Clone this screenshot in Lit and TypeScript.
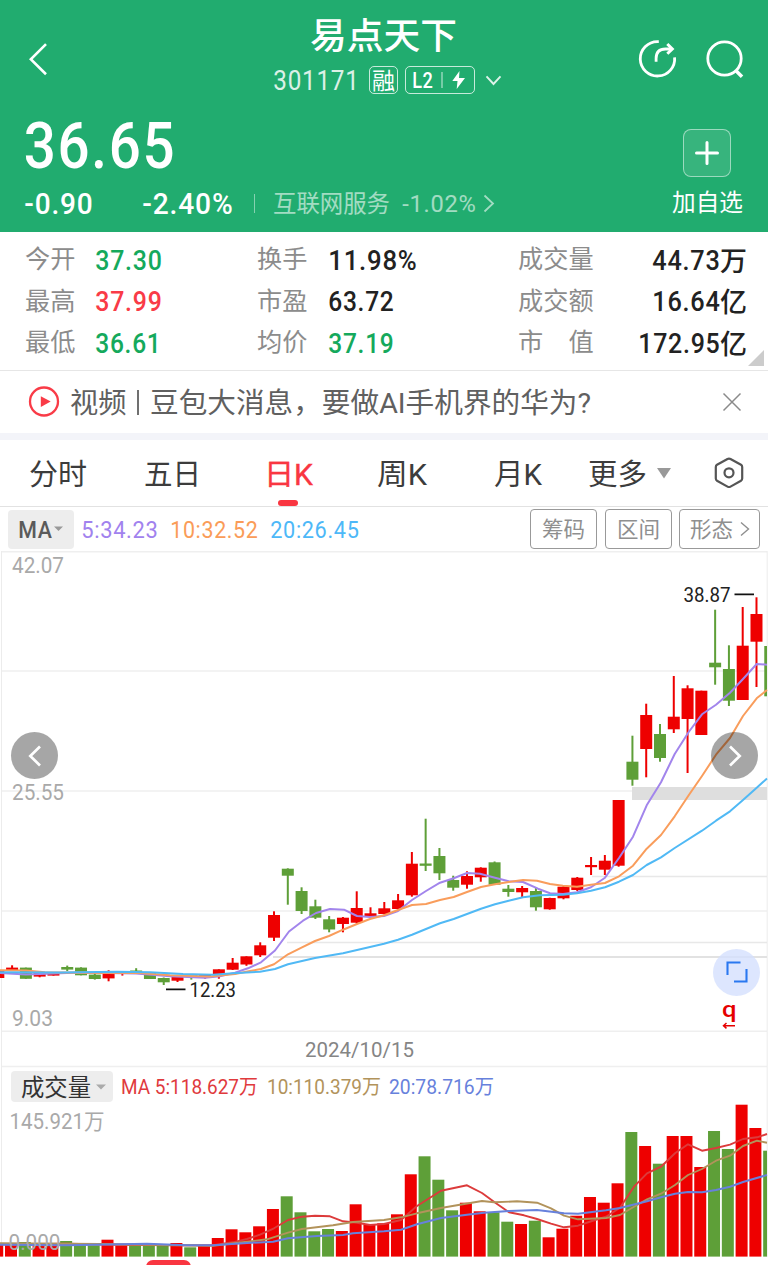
import { LitElement, html, svg, css } from "lit";
import { customElement } from "lit/decorators.js";

const CJK = /[\u3400-\u9fff]/;

/** A single line of text drawn at a fixed advance width; figures get slightly looser tracking. */
const fit = (s: string, w: number, size: number, cls = "") => {
  const cjk = CJK.test(s);
  const track = cjk ? 0 : size * 0.03;
  return html`<svg class="fit ${cls}" width=${w} height=${size}>
  <text x=${track / 3} y=${size * (cjk ? 0.88 : 0.856)} font-size=${size} letter-spacing=${track}
    textLength=${w + track / 3} lengthAdjust="spacingAndGlyphs">${s}</text></svg>`;
};

const label = (s: string, x: number, y: number, w: number, size: number, cls: string) => svg`<text
  class=${cls} x=${x} y=${y} font-size=${size} textLength=${w} lengthAdjust="spacingAndGlyphs">${s}</text>`;

const textCss = css`
  :host { display: block; font-family: Roboto, "Noto Sans CJK SC", sans-serif; }
  svg { display: block; flex: none; }
  text { font-family: Roboto, "Noto Sans CJK SC", sans-serif; fill: currentColor; white-space: pre; }
  .fit { overflow: visible; }
  .m { font-weight: 500; }
`;

const STEP = 13.785;
const UP = "#ee0000";
const DOWN = "#5e9f38";

// colour, body top, body bottom, high, low
type Candle = [string, number, number, number, number];
const candles: Candle[] = [
  ["r", 971, 978, 971, 978], ["r", 967.6, 971, 965.3, 971], ["g", 967.6, 978.8, 967.6, 978.8],
  ["r", 972, 976.6, 972, 977.3], ["r", 973, 975.6, 973, 975.6], ["g", 967, 969.6, 965.6, 971],
  ["g", 967.6, 975.3, 967.3, 975.3], ["g", 974.6, 979, 973, 979.6], ["r", 973, 978.4, 970.3, 981.3],
  ["r", 972.5, 974, 972, 975.6], ["g", 970.5, 972.5, 968.2, 973], ["g", 973, 979, 973, 979],
  ["g", 978, 982.3, 977.5, 985], ["r", 976, 980.7, 976, 982], ["g", 974, 976.5, 974, 979.6],
  ["r", 975, 978, 975, 978.6], ["r", 969.3, 975, 969.3, 978.7], ["r", 962.7, 969.7, 958, 970],
  ["r", 956.3, 964.5, 956.3, 965.8], ["r", 945.3, 955.3, 942.3, 957], ["r", 915, 937.7, 911.3, 941],
  ["g", 868.7, 875.7, 868.3, 904.7], ["g", 891, 911, 887.3, 914], ["g", 906.3, 917.7, 899.7, 919],
  ["g", 919.3, 929.5, 916, 932.3], ["r", 917.7, 924, 917, 932.3], ["r", 908, 922.7, 891.3, 923.7],
  ["r", 913.3, 916.7, 907.3, 917], ["r", 908.3, 914, 902, 914.5], ["r", 900.3, 909, 894, 909.5],
  ["r", 863.7, 895.3, 852, 896.7], ["g", 863.5, 865.8, 818.7, 871], ["g", 856, 873.3, 848, 880],
  ["g", 880, 887.7, 875.7, 890.7], ["r", 876, 884.7, 871.3, 888.7], ["r", 867.7, 877.3, 867.3, 881.7],
  ["g", 862.3, 884.7, 861.5, 885], ["g", 888.7, 892, 885, 896.7], ["r", 888, 892.3, 886, 897],
  ["g", 891, 907.3, 887.7, 910.7], ["r", 898, 909.3, 897.7, 909.7], ["r", 886.7, 898.3, 886, 899.3],
  ["r", 877.7, 890, 877, 891], ["r", 865, 867.2, 857, 875], ["r", 860.7, 869.7, 855, 875],
  ["r", 800, 865.7, 800, 866.7], ["g", 761.7, 779.7, 735.7, 785.7], ["r", 715, 749, 703.7, 777.3],
  ["g", 734, 758, 724, 761.7], ["r", 716.7, 729.3, 676, 733], ["r", 688.3, 719, 685.3, 773],
  ["r", 690.7, 735, 690.7, 735], ["g", 662.7, 667.3, 609.7, 684.7], ["g", 669, 700.7, 645.3, 706],
  ["r", 645.7, 700, 607, 700], ["r", 614, 641.7, 597.3, 687], ["g", 646, 696.3, 646, 696.3],
];

const ma5 = "0,973 26,974.5 40,974 80,972.5 136,973.5 170,976.3 205,977.7 220,976.2 235,972.6 248,968.3 261,962.3 275,950.5 289,931.5 303,920.7 316,913 330,909 344,909.7 357,916 370,917 384,916 398,911 412,900 426,891 440,882.7 453.7,878.3 467,873 480,873.7 495,877.7 508.7,881.3 523,882 538,888.7 550,893.3 563,894 577,892.3 591,887.3 605,877.7 619,858 633,836.7 646.7,805.3 661,782.3 674.7,754 688.7,732 702,714.3 716,704.7 730,692.7 743,679 756.7,664 767,664.7";
const ma10 = "0,970.3 26,970.5 45,972.3 80,972.8 140,973 170,975.2 210,976.4 235,974 250,971 261,969 274,964.3 288,954.3 302,947.3 315,941 329,936 343,929.7 357,924 370,919 384,915.3 398,910 412,905 426,904 440,900 453.7,897 467,892 481,887 495,884.3 508.7,882 523,880 537,880.8 550,884 563,885.7 577,886.7 591,884.7 605,883 619,876.3 633,865.7 646.7,848.7 661,835 674.7,816.3 688.7,795.3 702,776 716,754.7 730,738 743,716 756.7,698.3 767,690";
const ma20 = "0,972.3 60,972.5 117,971.7 150,972.3 183,974 213,974.7 233,973.3 260,971.7 275,969 288,964.3 302,961 315,958 343,953.3 384,943.7 398,939.7 412,934.7 440,923.3 453.7,919 481,908.7 495,904.3 508.7,900.7 523,897.3 540,895.3 563,894.7 577,893.3 591,890.7 605,887.3 619,881.7 633,875 646.7,865 661,857.3 674.7,848 702,830.7 716,820.7 730,811.3 743,800 756.7,787.7 767,778.5";

const volumeTop = [
  1244, 1245, 1242, 1245, 1245, 1241, 1245.3, 1245.3, 1239.7, 1245.3, 1245.3, 1245.7, 1246, 1243,
  1247.3, 1246, 1238, 1229.3, 1232.3, 1226.3, 1209, 1196.3, 1212.3, 1231.3, 1229, 1231, 1204.3,
  1224.7, 1223.3, 1214.3, 1174.3, 1156.3, 1179.7, 1210.3, 1202.7, 1211.3, 1212.3, 1221.7, 1224,
  1220.7, 1237.3, 1228.7, 1215.7, 1197, 1202.7, 1183.3, 1132, 1146, 1163.7, 1136, 1136, 1167,
  1131, 1149, 1104.7, 1128, 1150.7,
];
const vma5 = "0,1244.3 67,1243.7 117,1244.7 177,1245.3 213,1245.3 233,1242.3 247,1239 260,1234.7 274,1228.3 288,1220 302,1216.7 315,1215.7 330,1216.3 343,1221.3 357,1222.7 370,1225 384,1224 401,1220 417,1206 441,1190.7 467,1185.3 482,1193 496,1203.3 509,1212.3 524,1215.3 537,1219 551,1223.7 564,1227.3 578,1225.7 592,1221 606,1216.7 620,1207.7 634,1186.7 647,1173.3 661,1166.7 675,1153.3 688,1144.3 702,1150.7 716,1148 730,1144.7 743,1139 757,1137.3 767,1134";
const vma10 = "0,1243.3 100,1244 213,1245.7 247,1241.7 267,1239.3 288,1232.7 302,1229 333,1225.3 353,1222 384,1220 401,1217.3 417,1213.3 441,1208 454,1205.7 482,1201 494,1202.3 517,1201.3 537,1202.7 551,1208.3 564,1215.7 578,1219.3 606,1218 620,1215 634,1206.7 647,1199.3 661,1193.7 675,1185 688,1175 702,1169 716,1160.7 730,1155.7 743,1146 757,1140.7 767,1142.7";
const vma20 = "0,1244.7 67,1245.3 147,1243.7 187,1245.3 213,1245.3 247,1243 273,1241.7 288,1238.3 317,1236 343,1235 353,1233.3 384,1231.3 401,1229.7 417,1224.3 441,1218 467,1214.7 484,1212.7 509,1211 537,1210 564,1213.3 578,1213.7 606,1210.3 620,1208 647,1201.3 661,1197.3 675,1193.7 688,1192 702,1192.3 716,1190 730,1186.7 743,1182 767,1175";

@customElement("quote-header")
export class QuoteHeader extends LitElement {
  static styles = [textCss, css`
    :host { background: #21ac6f; color: #fff; height: 232px; overflow: hidden; }
    .top { display: flex; align-items: flex-start; height: 116px; }
    .back { margin: 43px 0 0 29px; }
    .name { margin-left: 224px; width: 229px; padding-top: 17px; }
    .title { margin-left: 37px; }
    .sub { display: flex; align-items: center; height: 28px; margin-top: 13px; }
    .code { opacity: .84; }
    .tag { display: flex; align-items: center; justify-content: center; box-sizing: border-box;
      border: 1.5px solid rgba(255,255,255,.75); border-radius: 5px; height: 28px; width: 29px; margin-left: 10px; }
    .level { width: 70px; margin-left: 7px; gap: 8px; }
    .chev { margin-left: 10px; }
    .share { margin: 39px 0 0 136px; }
    .search { margin: 39px 0 0 28px; }
    .bottom { display: flex; justify-content: space-between; }
    .price { margin: -4px 0 0 23px; }
    .row { display: flex; align-items: center; height: 30px; margin-top: 11px; padding-left: 24px; }
    .pct { margin-left: 49px; }
    .sep { width: 1px; height: 19px; background: rgba(255,255,255,.45); margin: 0 18px 0 21px; }
    .dim { opacity: .58; }
    .ind { margin-left: 12px; }
    .go { margin-left: 7px; }
    .add { width: 72px; margin: 13px 25px 0 0; display: flex; flex-direction: column; align-items: center; }
    .plus { box-sizing: border-box; width: 48px; height: 48px; border: 1px solid rgba(255,255,255,.5);
      border-radius: 8px; background: rgba(255,255,255,.1); display: flex; align-items: center; justify-content: center; margin-bottom: 12.500px; }
  `];
  render() {
    return html`
      <div class="top">
        <svg class="back" width="20" height="33" viewBox="0 0 20 33" fill="none" stroke="#fff" stroke-width="2.6"><path d="M17 1.2 1.8 16.3 17 31.2"/></svg>
        <div class="name">
          <div class="title">${fit("易点天下", 147, 36, "m")}</div>
          <div class="sub">
            ${fit("301171", 86, 28, "code")}
            <span class="tag">${fit("融", 23, 23)}</span>
            <span class="tag level">${fit("L2", 21, 22, "m")}
              <svg width="27" height="20" viewBox="0 0 27 20"><path d="M1 2v16" stroke="#fff" stroke-opacity=".6" stroke-width="1.3"/><path d="M18.500 1 11.300 11H16.500L15.700 19 24 8H18z" fill="#fff"/></svg>
            </span>
            <svg class="chev" width="17" height="11" viewBox="0 0 17 11" fill="none" stroke="#fff" stroke-opacity=".85" stroke-width="1.9"><path d="M1.500 1.300 8.500 9 15.500 1.300"/></svg>
          </div>
        </div>
        <svg class="share" width="40" height="40" viewBox="0 0 40 40" fill="none" stroke="#fff" stroke-width="2.800"><path d="M20.800 2.600H19.500A17.200 17.200 0 1 0 36.600 18.300"/><path d="M18.100 22.800V19.500Q18.100 10 27.500 10H33"/><path d="M29.300 5 34.300 9.900 29.300 14.800" stroke-width="3"/></svg>
        <svg class="search" width="42" height="42" viewBox="0 0 42 42" fill="none" stroke="#fff" stroke-width="2.800"><circle cx="18.500" cy="19.500" r="16.700"/><path d="m29.500 31.300 6.500 6.500" stroke-width="3.500"/></svg>
      </div>
      <div class="bottom">
        <div>
          <div class="price">${fit("36.65", 152, 65, "m")}</div>
          <div class="row">
            ${fit("-0.90", 69, 29, "m")}
            <span class="pct">${fit("-2.40%", 91, 29, "m")}</span>
            <span class="sep"></span>
            ${fit("互联网服务", 117, 23.5, "dim")}
            <span class="ind">${fit("-1.02%", 74, 24.5, "dim")}</span>
            <svg class="go dim" width="12" height="19" viewBox="0 0 12 19" fill="none" stroke="#fff" stroke-width="1.800"><path d="M1.500 1.500 10 9.500 1.500 17.500"/></svg>
          </div>
        </div>
        <div class="add">
          <span class="plus"><svg width="26" height="26" viewBox="0 0 26 26" stroke="#fff" stroke-width="3" stroke-linecap="round"><path d="M13 2.500v21M2.500 13h21"/></svg></span>
          ${fit("加自选", 71, 23.5)}
        </div>
      </div>`;
  }
}

type Stat = [string, string, string, number];
const stats: Stat[][] = [
  [["今开", "37.30", "green", 67], ["换手", "11.98%", "dark", 89], ["成交量", "44.73万", "dark", 95]],
  [["最高", "37.99", "red", 67], ["市盈", "63.72", "dark", 66], ["成交额", "16.64亿", "dark", 95]],
  [["最低", "36.61", "green", 66], ["均价", "37.19", "green", 66], ["市　值", "172.95亿", "dark", 109]],
];

@customElement("quote-stats")
export class QuoteStats extends LitElement {
  static styles = [textCss, css`
    :host { height: 138px; border-bottom: 1px solid #e6e6e6; position: relative; background: #fff; }
    .grid { padding: 7.500px 21px 0 25px; }
    .row { display: grid; grid-template-columns: 70px 162px 71px 190px 76px 1fr; height: 41.5px; align-items: center; }
    .label { color: #8c8c8c; margin-top: -3px; }
    .green { color: #15a95c; } .red { color: #f93b47; } .dark { color: #222; }
    .end { display: flex; justify-content: flex-end; }
    .corner { position: absolute; right: 4px; bottom: 4px; }
  `];
  render() {
    return html`<div class="grid">${stats.map(r => html`<div class="row">${r.map(([l, v, c, w], i) => {
      const num = v.replace(/[万亿]/, "");
      const unit = v.slice(num.length);
      return html`<span class="label">${fit(l, l.length * 25.2, 25)}</span>
        <span class="${c} ${i === 2 ? "end" : ""}">${unit ? html`${fit(num, w - 27, 27, "m")}${fit(unit, 27, 27, "m")}` : fit(v, w, 27, "m")}</span>`;
    })}</div>`)}</div>
    <svg class="corner" width="16" height="16"><path d="M16 0V16H0z" fill="#ccc"/></svg>`;
  }
}

@customElement("news-strip")
export class NewsStrip extends LitElement {
  static styles = [textCss, css`
    :host { height: 62px; background: #fff; border-bottom: 7px solid #f3f4f9; color: #606060; }
    .line { height: 100%; display: flex; align-items: center; padding: 0 26px 0 27.500px; }
    .head { margin-left: 10px; }
    .bar { width: 2px; height: 25px; background: #707070; margin: 0 11px; }
    .x { margin-left: auto; }
  `];
  render() {
    return html`<div class="line">
      <svg width="32" height="32" viewBox="0 0 32 32"><circle cx="16" cy="15.500" r="14" fill="none" stroke="#f93b47" stroke-width="2.300"/><path d="M12.800 10.300v10.600L22.700 15.600z" fill="#f93b47"/></svg>
      <span class="head">${fit("视频", 56.500, 28.3)}</span><span class="bar"></span>
      ${fit("豆包大消息，要做AI手机界的华为?", 441, 28.5)}
      <svg class="x" width="20" height="20" viewBox="0 0 20 20" stroke="#8a8a8a" stroke-width="1.500"><path d="m1.500 1.500 17 17m0-17-17 17"/></svg>
    </div>`;
  }
}

@customElement("period-tabs")
export class PeriodTabs extends LitElement {
  static styles = [textCss, css`
    :host { height: 66px; border-bottom: 1px solid #e2e2e2; color: #3c3c3c; background: #fff; }
    .tabs { height: 66px; display: grid; grid-template-columns: 115px 120px 113px 117px 94px 125px 1fr; padding-left: 29px; }
    .tab { display: flex; align-items: center; }
    .on { color: #f93641; flex-direction: column; align-items: flex-start; }
    .on::before { content: ""; height: 18.500px; }
    .on text { stroke: currentColor; stroke-width: .4px; }
    .under { width: 20px; height: 6px; border-radius: 3px; background: #f93641; margin: 12.500px 0 0 14px; }
    .tri { margin-left: 10px; }
  `];
  render() {
    return html`<div class="tabs">
      <span class="tab">${fit("分时", 58, 29)}</span>
      <span class="tab">${fit("五日", 57, 29)}</span>
      <span class="tab on">${fit("日K", 49, 29)}<i class="under"></i></span>
      <span class="tab">${fit("周K", 50, 29)}</span>
      <span class="tab">${fit("月K", 48, 29)}</span>
      <span class="tab">${fit("更多", 59, 29)}<svg class="tri" width="14" height="11"><path d="M0 0H14L7 10.500z" fill="#999"/></svg></span>
      <span class="tab"><svg width="32" height="34" viewBox="0 0 32 34" fill="none" stroke="#555" stroke-width="2.200" stroke-linejoin="round"><path d="M14.500 3 4 8.800Q2.800 9.500 2.800 11V22.500Q2.800 24 4 24.700L14.500 30.600Q16 31.400 17.500 30.600L28 24.700Q29.200 24 29.200 22.500V11Q29.200 9.500 28 8.800L17.500 3Q16 2.200 14.500 3z"/><circle cx="16" cy="16.800" r="4.500"/></svg></span>
    </div>`;
  }
}

@customElement("indicator-bar")
export class IndicatorBar extends LitElement {
  static styles = [textCss, css`
    :host { height: 44px; background: #fff; }
    .bar { height: 44px; display: flex; align-items: center; padding: 0 8px; }
    .chip { width: 66px; height: 39px; background: #ededed; border-radius: 4px; display: flex; align-items: center; padding-left: 10px; box-sizing: border-box; color: #5a5a5a; gap: 2px; }
    .a { color: #a182ee; margin-left: 7px; } .b { color: #fa9c58; margin-left: 12px; } .c { color: #4db8f8; margin-left: 12px; }
    .btns { display: flex; gap: 7.500px; margin-left: auto; color: #8f8f8f; }
    .btn { box-sizing: border-box; width: 67px; height: 40px; border: 1px solid #999; border-radius: 4px; display: flex; align-items: center; justify-content: center; gap: 7px; }
    .wide { width: 81px; }
  `];
  render() {
    return html`<div class="bar">
      <span class="chip">${fit("MA", 34, 24, "m")}<svg width="9" height="6"><path d="M0 .500H9L4.500 5z" fill="#999"/></svg></span>
      <span class="a">${fit("5:34.23", 77, 24.500)}</span>
      <span class="b">${fit("10:32.52", 88, 24.500)}</span>
      <span class="c">${fit("20:26.45", 89, 24.500)}</span>
      <div class="btns">
        <span class="btn">${fit("筹码", 43, 21.500)}</span>
        <span class="btn">${fit("区间", 43, 21.500)}</span>
        <span class="btn wide">${fit("形态", 43, 21.500)}<svg width="10" height="16" viewBox="0 0 10 16" fill="none" stroke="#8f8f8f" stroke-width="1.400"><path d="m1 1.500 7.500 6.500L1 14.500"/></svg></span>
      </div>
    </div>`;
  }
}

@customElement("stock-charts")
export class StockCharts extends LitElement {
  static styles = [textCss, css`
    :host { position: relative; height: 714px; overflow: hidden; background: #fff; }
    .axis { color: #a9a9a9; } .mark { color: #222; } .date { color: #858585; }
    .nav { position: absolute; top: 181px; width: 47px; height: 47px; border-radius: 50%; background: rgba(0,0,0,.35); display: flex; align-items: center; justify-content: center; }
    .prev { left: 11px; } .next { left: 711px; }
    .full { position: absolute; top: 397.500px; left: 713px; width: 47px; height: 47px; border-radius: 50%; background: rgba(213,224,254,.8); display: flex; align-items: center; justify-content: center; }
    .head { position: absolute; top: 520px; left: 11px; display: flex; align-items: center; height: 31px; }
    .chip { width: 102px; height: 31px; box-sizing: border-box; background: #ededed; border-radius: 4px; display: flex; align-items: center; padding-left: 10px; gap: 5px; color: #333; }
    .a { color: #e03a3d; margin-left: 8px; } .b { color: #b2935b; margin-left: 9px; } .c { color: #6781dc; margin-left: 8px; }
    .pill { position: absolute; left: 146px; top: 708.500px; width: 45px; height: 14px; border-radius: 9px; background: #f93641; }
    .q { color: #e60000; }
  `];
  render() {
    const grid = (y: number, x = 1, c = "#efefef", w = 1.400) => svg`<path d="M${x} ${y}H767" stroke=${c} stroke-width=${w}/>`;
    const line = (p: string, c: string, w = 2) => svg`<polyline points=${p} fill="none" stroke=${c} stroke-width=${w} stroke-linejoin="round"/>`;
    return html`
      <svg width="768" height="714" viewBox="0 551 768 714">
        ${[551.700, 671, 791, 911, 1031.300, 1066.500].map(y => grid(y))}
        <path d="M1.500 551V1257M767.200 551V1257" stroke="#ececec"/>
        ${grid(876.500, 592, "#e8e8e8")}${grid(942.500, 287, "#e8e8e8")}${grid(957, 273, "#e2e2e2", 1.800)}
        <rect x="632" y="787" width="135" height="13" fill="#dedede"/>
        ${label("42.07", 12, 573.300, 52, 22, "axis")}
        ${label("25.55", 12, 799.500, 52, 22, "axis")}
        ${label("9.03", 12, 1025.700, 41, 22, "axis")}
        ${candles.map(([k, t, b, h, l], n) => {
          const x = 12.100 + STEP * (n - 1);
          const c = k === "r" ? UP : DOWN;
          const right = Math.min(x + 6, 767);
          return svg`<rect x=${x - 6} y=${t} width=${right - x + 6} height=${b - t} fill=${c}/>${x < 767 && x > 0 ? svg`<rect x=${x - 1} y=${h} width="2" height=${l - h} fill=${c}/>` : ""}`;
        })}
        ${line(ma5, "#a285ec")}${line(ma10, "#f99d5c")}${line(ma20, "#50b9f5")}
        <path d="M166 989.300H185.500M734.500 594.400H754" stroke="#111" stroke-width="1.800"/>
        ${label("12.23", 189.500, 997.300, 46.500, 19.500, "mark")}
        ${label("38.87", 683.500, 602, 47, 19.500, "mark")}
        ${label("2024/10/15", 305, 1057, 109, 21, "date")}
        ${label("q", 722, 1016.800, 14.500, 22.800, "q m")}
        <path d="M723.500 1025.700H735M726.500 1023 723.500 1025.700 726.500 1028.400" fill="none" stroke="#e60000" stroke-width="1.500"/>
        ${volumeTop.map((t, n) => {
          const x = 11 + STEP * (n - 1) - 6;
          return svg`<rect x=${x} y=${t} width=${Math.min(12, 767 - x)} height=${1256.600 - t} fill=${candles[n][0] === "r" ? UP : DOWN}/>`;
        })}
        ${line(vma5, "#dc3b3b", 1.900)}${line(vma10, "#b2935b", 1.900)}${line(vma20, "#6781dc", 2)}
        ${label("145.921万", 9.500, 1128.500, 95, 22, "axis")}
        ${label("0.000", 8.500, 1249.600, 52, 22, "axis")}
      </svg>
      <span class="nav prev"><svg width="14" height="22" viewBox="0 0 14 22" fill="none" stroke="#fff" stroke-width="2.700"><path d="M12 1.500 2.300 11 12 20.500"/></svg></span>
      <span class="nav next"><svg width="14" height="22" viewBox="0 0 14 22" fill="none" stroke="#fff" stroke-width="2.700"><path d="m2 1.500 9.700 9.500L2 20.500"/></svg></span>
      <span class="full"><svg width="22" height="22" viewBox="0 0 22 22" fill="none" stroke="#2a78f0" stroke-width="2.100"><path d="M1.500 14V1.500H14.500M20.500 8V20.500H8"/></svg></span>
      <div class="head">
        <span class="chip">${fit("成交量", 70, 23.500)}<svg width="10" height="6"><path d="M0 .500H10L5 5.500z" fill="#aaa"/></svg></span>
        <span class="a">${fit("MA 5:118.627万", 137, 20.800)}</span>
        <span class="b">${fit("10:110.379万", 114, 20.800)}</span>
        <span class="c">${fit("20:78.716万", 105, 20.800)}</span>
      </div>
      <span class="pill"></span>`;
  }
}

@customElement("app-root")
export class AppRoot extends LitElement {
  static styles = css`
    :host { display: flex; flex-direction: column; width: 768px; height: 1265px; overflow: hidden; background: #fff; }
  `;
  render() {
    return html`<quote-header></quote-header><quote-stats></quote-stats><news-strip></news-strip>
      <period-tabs></period-tabs><indicator-bar></indicator-bar><stock-charts></stock-charts>`;
  }
}
